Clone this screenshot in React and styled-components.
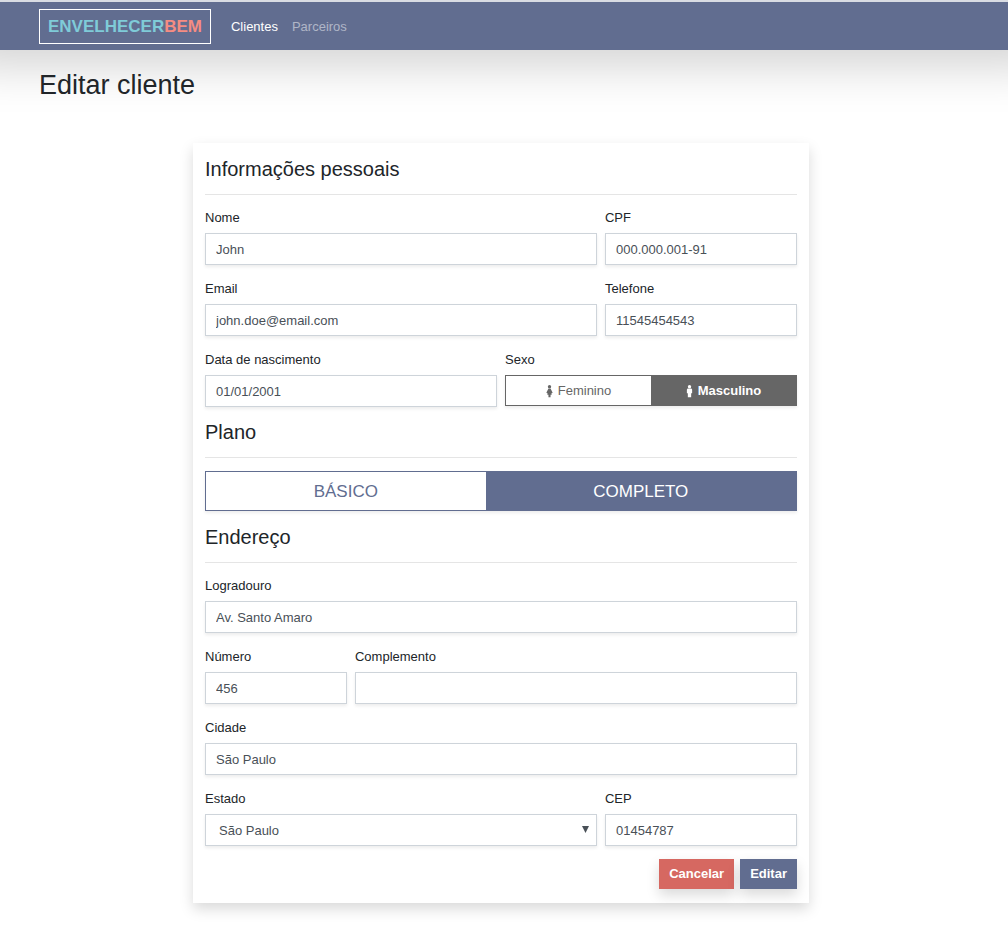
import React from "react";
import styled, { createGlobalStyle, css } from "styled-components";

const slate = "#616d90";
const gray = "#666666";

const GlobalStyle = createGlobalStyle`
  *, *::before, *::after { box-sizing: border-box; }
  body {
    margin: 0;
    background: #fff;
    color: #212529;
    font: 13px/19px Arial, "Liberation Sans", sans-serif;
  }
  input, select, button { font: inherit; border-radius: 0; }
`;

const NavBar = styled.header`
  display: flex;
  align-items: center;
  gap: 20px;
  height: 50px;
  padding: 2px 45px 0 39px;
  border-top: 2px solid #d9dce3;
  background: ${slate};
  box-shadow: 0 -24px 48px 40px rgba(0, 0, 0, 0.175);
`;

const Brand = styled.a`
  padding: 7px 8px;
  border: 1px solid #fff;
  margin-bottom: 1px;
  color: #7fcbd8;
  font-size: 17px;
  font-weight: bold;
  text-decoration: none;
`;

const BrandAccent = styled.span`
  color: #f58c82;
`;

const NavLinks = styled.nav`
  display: flex;
  gap: 14px;
  padding-bottom: 2px;
`;

const NavLink = styled.a`
  color: ${(p) => (p.$active ? "#fff" : "rgba(255, 255, 255, 0.5)")};
  text-decoration: none;
`;

const Page = styled.main`
  padding: 19px 45px 45px 39px;
`;

const Title = styled.h1`
  margin: 0 0 42px;
  font-size: 27px;
  line-height: 32px;
  font-weight: normal;
`;

const Card = styled.form`
  width: calc(100% * 2 / 3);
  margin: 0 auto;
  padding: 14px 12px;
  background: #fff;
  box-shadow: 0 6px 13px rgba(0, 0, 0, 0.15);
`;

const SectionTitle = styled.h2`
  margin: 0;
  font-size: 20px;
  line-height: 24px;
  font-weight: normal;
`;

const Divider = styled.hr`
  height: 1px;
  margin: 13px 0;
  border: 0;
  background: #e5e5e5;
`;

const FieldGrid = styled.div`
  display: grid;
  grid-template-columns: repeat(12, minmax(0, 1fr));
  gap: 14px 8px;
  margin-bottom: 13px;
`;

const FieldBox = styled.div`
  grid-column: span ${(p) => p.$span};
  min-width: 0;
`;

const labelText = css`
  display: block;
  margin-bottom: 6px;
  line-height: 19px;
`;

const Label = styled.label`
  ${labelText}
`;

const GroupLabel = styled.span`
  ${labelText}
`;

const control = css`
  display: block;
  width: 100%;
  height: 32px;
  border: 1px solid #ced4da;
  background: #fff;
  color: #495057;
  box-shadow: 0 2px 3px rgba(0, 0, 0, 0.075);
`;

const TextInput = styled.input`
  ${control}
  padding: 0 10px;
`;

const SelectWrap = styled.div`
  position: relative;
`;

const Select = styled.select`
  ${control}
  padding: 0 26px 0 13px;
  appearance: none;
`;

const SelectArrow = styled.svg`
  position: absolute;
  top: 12px;
  right: 8px;
  pointer-events: none;
`;

const Toggle = styled.div`
  display: flex;
  margin-bottom: ${(p) => (p.$large ? "14px" : "0")};
  color: ${(p) => (p.$large ? slate : gray)};
  font-size: ${(p) => (p.$large ? "17px" : "13px")};
  box-shadow: 0 2px 3px rgba(0, 0, 0, 0.075);
`;

const ToggleOption = styled.label`
  display: flex;
  flex: 1 1 ${(p) => (p.$large ? "auto" : "0")};
  align-items: center;
  justify-content: center;
  gap: 5px;
  height: ${(p) => (p.$large ? "40px" : "31px")};
  border: 1px solid currentColor;
  cursor: pointer;

  &:has(input:checked) {
    background: ${(p) => (p.$large ? slate : gray)};
    border-color: ${(p) => (p.$large ? slate : gray)};
    color: #fff;
    font-weight: ${(p) => (p.$large ? "normal" : "bold")};
  }
  & + & { border-left: 0; }
  &:not(:last-child) { border-right: 0; }
`;

const HiddenRadio = styled.input`
  position: absolute;
  opacity: 0;
  pointer-events: none;
`;

const Actions = styled.div`
  display: flex;
  justify-content: flex-end;
  gap: 6px;
`;

const Button = styled.button`
  height: 30px;
  padding: 0 10px 2px;
  border: 0;
  background: ${(p) => (p.$danger ? "#d66861" : slate)};
  color: #fff;
  font-weight: bold;
  box-shadow: 0 6px 13px rgba(0, 0, 0, 0.15);
  cursor: pointer;
`;

function Field({ id, label, span, value = "", type = "text" }) {
  return (
    <FieldBox $span={span}>
      <Label htmlFor={id}>{label}</Label>
      <TextInput id={id} name={id} type={type} defaultValue={value} />
    </FieldBox>
  );
}

function FemaleIcon() {
  return (
    <svg width="7" height="14" viewBox="0 0 8 14" fill="currentColor" aria-hidden="true">
      <circle cx="4" cy="2" r="1.9" />
      <path d="M2.800 4h2.400L7.600 9l-1 .7-.4-.4.3 1.900H5.200V14H2.800v-2.800H1.500l.3-1.900-.4.400-1-.7z" />
    </svg>
  );
}

function MaleIcon() {
  return (
    <svg width="7" height="14" viewBox="0 0 8 14" fill="currentColor" aria-hidden="true">
      <circle cx="4" cy="2" r="1.9" />
      <path d="M2.500 4h3Q7 4 7 5.500V9.500H5.900V14H2.100V9.500H1V5.500Q1 4 2.500 4z" />
    </svg>
  );
}

export default function App() {
  return (
    <>
      <GlobalStyle />
      <NavBar>
        <Brand href="#">
          ENVELHECER<BrandAccent>BEM</BrandAccent>
        </Brand>
        <NavLinks>
          <NavLink href="#clientes" $active>Clientes</NavLink>
          <NavLink href="#parceiros">Parceiros</NavLink>
        </NavLinks>
      </NavBar>
      <Page>
        <Title>Editar cliente</Title>
        <Card onSubmit={(e) => e.preventDefault()}>
          <SectionTitle>Informações pessoais</SectionTitle>
          <Divider />
          <FieldGrid>
            <Field id="nome" label="Nome" span={8} value="John" />
            <Field id="cpf" label="CPF" span={4} value="000.000.001-91" />
            <Field id="email" label="Email" span={8} type="email" value="john.doe@email.com" />
            <Field id="telefone" label="Telefone" span={4} type="tel" value="11545454543" />
            <Field id="nascimento" label="Data de nascimento" span={6} value="01/01/2001" />
            <FieldBox $span={6}>
              <GroupLabel id="sexo">Sexo</GroupLabel>
              <Toggle role="radiogroup" aria-labelledby="sexo">
                <ToggleOption>
                  <HiddenRadio type="radio" name="sexo" value="F" />
                  <FemaleIcon />
                  Feminino
                </ToggleOption>
                <ToggleOption>
                  <HiddenRadio type="radio" name="sexo" value="M" defaultChecked />
                  <MaleIcon />
                  Masculino
                </ToggleOption>
              </Toggle>
            </FieldBox>
          </FieldGrid>

          <SectionTitle id="plano">Plano</SectionTitle>
          <Divider />
          <Toggle $large role="radiogroup" aria-labelledby="plano">
            <ToggleOption $large>
              <HiddenRadio type="radio" name="plano" value="basico" />
              BÁSICO
            </ToggleOption>
            <ToggleOption $large>
              <HiddenRadio type="radio" name="plano" value="completo" defaultChecked />
              COMPLETO
            </ToggleOption>
          </Toggle>

          <SectionTitle>Endereço</SectionTitle>
          <Divider />
          <FieldGrid>
            <Field id="logradouro" label="Logradouro" span={12} value="Av. Santo Amaro" />
            <Field id="numero" label="Número" span={3} value="456" />
            <Field id="complemento" label="Complemento" span={9} />
            <Field id="cidade" label="Cidade" span={12} value="São Paulo" />
            <FieldBox $span={8}>
              <Label htmlFor="estado">Estado</Label>
              <SelectWrap>
                <Select id="estado" name="estado" defaultValue="SP">
                  <option value="SP">São Paulo</option>
                </Select>
                <SelectArrow width="7" height="7" viewBox="0 0 7 7" fill="#495057" aria-hidden="true">
                  <path d="M0 0h7L3.500 7z" />
                </SelectArrow>
              </SelectWrap>
            </FieldBox>
            <Field id="cep" label="CEP" span={4} value="01454787" />
          </FieldGrid>

          <Actions>
            <Button type="button" $danger>Cancelar</Button>
            <Button type="submit">Editar</Button>
          </Actions>
        </Card>
      </Page>
    </>
  );
}
